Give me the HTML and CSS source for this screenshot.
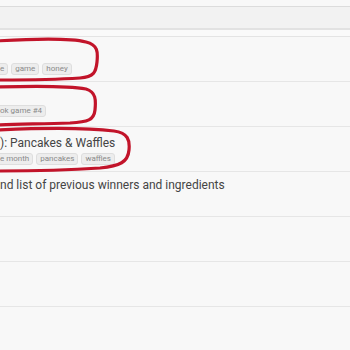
FILE: index.html
```html
<!DOCTYPE html>
<html lang="en">
<head>
  <meta charset="UTF-8" />
  <title>Recipe threads</title>
  <link rel="stylesheet" href="styles.css">
</head>
<body>
  <div class="page">
    <div class="toolbar"></div>
    <div class="subbar"></div>

    <ul class="topics">
      <li class="topic">
        <div class="topic-title"></div>
        <div class="tags">
          <span class="tag tag-cut">e</span>
          <span class="tag">game</span>
          <span class="tag">honey</span>
        </div>
      </li>
      <li class="topic topic-tight">
        <div class="topic-title"></div>
        <div class="tags">
          <span class="tag tag-cut">ok game #4</span>
        </div>
      </li>
      <li class="topic">
        <div class="topic-title">): Pancakes &amp; Waffles</div>
        <div class="tags">
          <span class="tag tag-cut">e month</span>
          <span class="tag">pancakes</span>
          <span class="tag">waffles</span>
        </div>
      </li>
      <li class="topic topic-tight">
        <div class="topic-title">nd list of previous winners and ingredients</div>
      </li>
      <li class="topic"></li>
      <li class="topic"></li>
      <li class="topic"></li>
    </ul>

    <!-- hand drawn marks over the list -->
    <svg class="marks" width="350" height="350" viewBox="0 0 350 350">
      <path d="M-4 41 C30 39 70 38 86 42 C98 45 98 52 97 62 C96 72 94 77 80 78 C50 80 20 80 -4 80" />
      <path d="M-4 87 C30 86 70 86 86 89 C96 92 96 100 95 110 C94 120 88 122 70 123 C40 124 15 124 -4 125" />
      <path d="M-4 130 C40 128 90 128 114 131 C128 133 130 140 129 150 C128 162 120 166 100 168 C70 170 30 171 -4 171" />
    </svg>
  </div>
</body>
</html>
```

FILE: styles.css
```css
* {
  box-sizing: border-box;
}

body {
  margin: 0;
  background-color: #f8f8f8;
  font-family: Roboto, "Liberation Sans", sans-serif;
  color: #444;
}

.page {
  position: relative;
  width: 350px;
  height: 350px;
  overflow: hidden;
}

.toolbar {
  height: 24px;
  margin-top: 6px;
  border-top: 1px solid #dcdcdc;
  border-bottom: 2px solid #e2e2e2;
  background-color: #f2f2f2;
}

.subbar {
  height: 7px;
  background-color: #fafafa;
  border-bottom: 1px solid #e4e4e4;
}

.topics {
  list-style: none;
  margin: 0;
  padding: 0;
}

.topic {
  height: 45px;
  padding-top: 8px;
  border-bottom: 1px solid #e6e6e6;
}

.topic-tight {
  padding-top: 5px;
}

.topic-title {
  height: 16px;
  font-size: 12px;
  line-height: 16px;
  white-space: nowrap;
  color: #454545;
}

.tags {
  display: flex;
  gap: 3px;
  margin-top: 2px;
}

.tag {
  display: inline-block;
  height: 12px;
  padding: 0 3px;
  font-size: 8px;
  line-height: 10px;
  color: #8a8a8a;
  background-color: #ededed;
  border: 1px solid #dedede;
  border-radius: 3px;
  white-space: nowrap;
}

.tag-cut {
  margin-left: -4px;
}

.marks {
  position: absolute;
  left: 0;
  top: 0;
  pointer-events: none;
}

.marks path {
  fill: none;
  stroke: #c2142a;
  stroke-width: 3.2;
  stroke-linecap: round;
}
```
